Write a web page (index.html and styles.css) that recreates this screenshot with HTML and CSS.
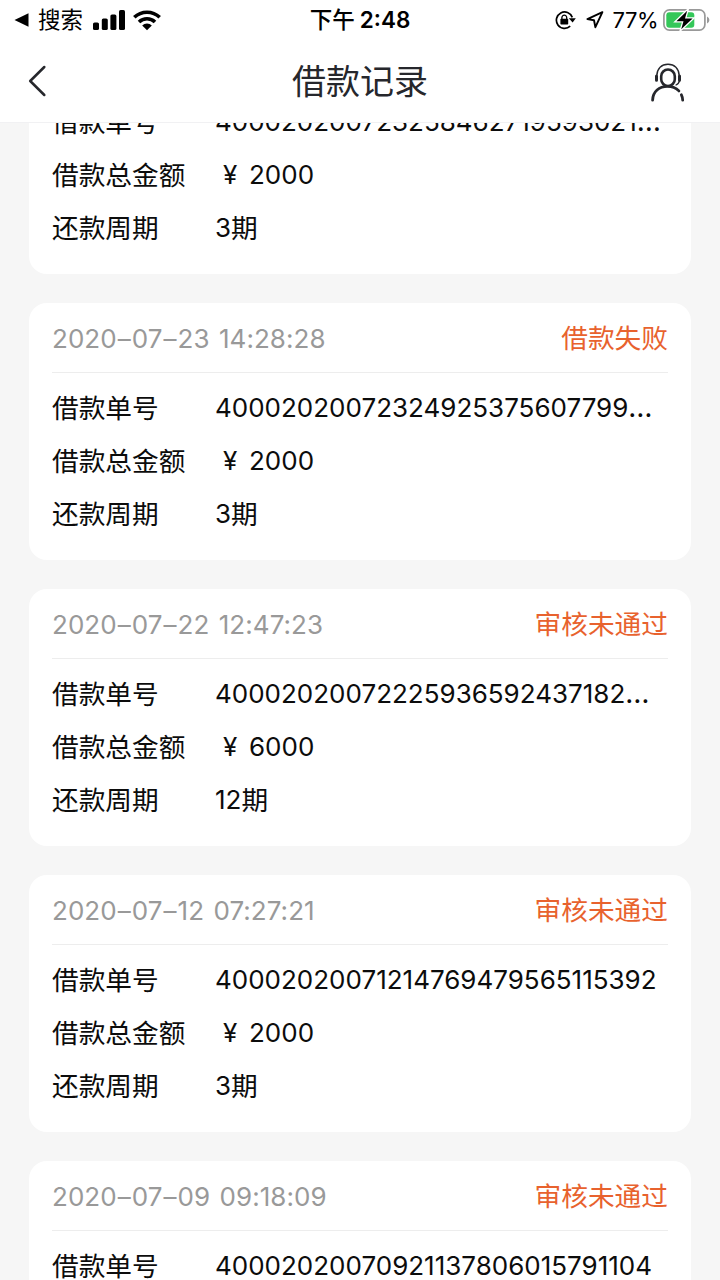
FILE: index.html
```
<!DOCTYPE html>
<html lang="zh-CN">
    <head>
        <meta charset="utf-8">
        <title>借款记录</title>
        <meta name="viewport" content="width=device-width, initial-scale=1">
        <link rel="stylesheet" href="styles.css">
    </head>

    <body>
        <!-- Status bar -->
        <div class="status">
            <div class="status-left">
                <svg class="back-app" width="15" height="14" viewBox="0 0 15 14"><path d="M0.5 7L14.5 0.3V13.7Z"/></svg>
                <span class="search">搜索</span>
                <svg class="signal" width="32" height="21" viewBox="0 0 32 21">
                    <rect x="0" y="12.5" width="6" height="7.5" rx="1.6"/>
                    <rect x="8.8" y="8.5" width="6" height="11.5" rx="1.6"/>
                    <rect x="17.4" y="4.5" width="6" height="15.5" rx="1.6"/>
                    <rect x="26" y="0" width="6" height="20" rx="1.6"/>
                </svg>
                <svg class="wifi" width="28" height="21" viewBox="0 0 28 21">
                    <path d="M1.3 7.3A18.3 18.3 0 0 1 26.7 7.3M6 12A11.5 11.5 0 0 1 22 12" fill="none" stroke="#000" stroke-width="3.6"/>
                    <path d="M9.2 15.4A6.8 6.8 0 0 1 18.8 15.4L14 20.3Z"/>
                </svg>
            </div>
            <div class="status-time"><span>下午</span><b>2:48</b></div>
            <div class="status-right">
                <svg class="lock" width="21" height="20" viewBox="0 0 21 20">
                    <path d="M15.2 16.2A8.2 8.2 0 1 1 17.3 7.4" fill="none" stroke="#000" stroke-width="1.7"/>
                    <path d="M13.8 8.2H20.8L17.6 12.6Z"/>
                    <rect x="5.4" y="8.8" width="7.8" height="5.7" rx="0.8"/>
                    <path d="M6.9 9.5V7.6A2.4 2.4 0 0 1 11.7 7.6V9.5" fill="none" stroke="#000" stroke-width="1.3"/>
                </svg>
                <svg class="arrow" width="18" height="18" viewBox="0 0 18 18"><path d="M16.4 1.2L1.4 8.1L8 9.2L9.4 16.2Z" fill="none" stroke="#000" stroke-width="1.9" stroke-linejoin="round"/></svg>
                <span class="percent">77%</span>
                <svg class="battery" width="47" height="22" viewBox="0 0 47 22">
                    <rect x="0.9" y="0.9" width="41" height="20.2" rx="5.5" fill="#fff" stroke="#999" stroke-width="1.7"/>
                    <rect x="3.3" y="3.3" width="28" height="15.4" rx="3" fill="#34c759"/>
                    <path d="M44 7.4V14.6Q46.4 13.6 46.4 11T44 7.4Z" fill="#999"/>
                    <path d="M24.2 1.8L13.4 12.3H20.5L18.2 20.2L29.6 9.5H22Z" stroke="#fff" stroke-width="2.6" paint-order="stroke"/>
                </svg>
            </div>
        </div>

        <!-- Title bar -->
        <div class="navbar">
            <svg class="back" width="19" height="32" viewBox="0 0 19 32"><path d="M16.3 2L2.2 16L16.3 30" fill="none" stroke="#26272c" stroke-width="2.5" stroke-linecap="round" stroke-linejoin="round"/></svg>
            <h1>借款记录</h1>
            <svg class="service" width="34" height="40" viewBox="0 0 34 40">
                <g fill="none" stroke="#26272c">
                    <rect x="10.2" y="6.5" width="13.6" height="16.5" rx="6.8" stroke-width="2.6"/>
                    <path d="M5.8 12.5C6.3 5.4 10.5 1.2 17 1.2S27.7 5.4 28.2 12.5" stroke-width="1.5"/>
                    <path d="M5.5 13V17.3M28.5 13V17.3" stroke-width="3" stroke-linecap="round"/>
                    <path d="M28.6 17.5Q27.8 21 24.6 22.2" stroke-width="1.2"/>
                    <path d="M1.6 37.2C1.8 28.5 8.3 23.3 16.5 23.3C21.2 23.3 25 24.9 27.9 27.9M30.4 31.8Q31.6 34.2 31.7 37.2" stroke-width="2.8" stroke-linecap="round"/>
                </g>
            </svg>
        </div>

        <!-- Loan records -->
        <div class="page">
            <div class="list">
                <div class="card">
                    <div class="card-head"></div>
                    <div class="card-body">
                        <p><label>借款单号</label><span class="num">400020200723258462719593021<i>…</i></span></p>
                        <p><label>借款总金额</label><span class="yen">¥</span><span class="num">2000</span></p>
                        <p><label>还款周期</label><span class="num">3</span>期</p>
                    </div>
                </div>
                <div class="card">
                    <div class="card-head"><span class="date">2020<i>–</i>07<i>–</i>23 14:28:28</span><span class="state">借款失败</span></div>
                    <div class="card-body">
                        <p><label>借款单号</label><span class="num">40002020072324925375607799<i>…</i></span></p>
                        <p><label>借款总金额</label><span class="yen">¥</span><span class="num">2000</span></p>
                        <p><label>还款周期</label><span class="num">3</span>期</p>
                    </div>
                </div>
                <div class="card">
                    <div class="card-head"><span class="date">2020<i>–</i>07<i>–</i>22 12:47:23</span><span class="state">审核未通过</span></div>
                    <div class="card-body">
                        <p><label>借款单号</label><span class="num">40002020072225936592437182<i>…</i></span></p>
                        <p><label>借款总金额</label><span class="yen">¥</span><span class="num">6000</span></p>
                        <p><label>还款周期</label><span class="num">12</span>期</p>
                    </div>
                </div>
                <div class="card">
                    <div class="card-head"><span class="date">2020<i>–</i>07<i>–</i>12 07:27:21</span><span class="state">审核未通过</span></div>
                    <div class="card-body">
                        <p><label>借款单号</label><span class="num">40002020071214769479565115392</span></p>
                        <p><label>借款总金额</label><span class="yen">¥</span><span class="num">2000</span></p>
                        <p><label>还款周期</label><span class="num">3</span>期</p>
                    </div>
                </div>
                <div class="card">
                    <div class="card-head"><span class="date">2020<i>–</i>07<i>–</i>09 09:18:09</span><span class="state">审核未通过</span></div>
                    <div class="card-body">
                        <p><label>借款单号</label><span class="num">40002020070921137806015791104</span></p>
                    </div>
                </div>
            </div>
        </div>
    </body>
</html>
```
FILE: styles.css
```
* {
    box-sizing: border-box;
}
body {
    margin: 0;
    height: 1280px;
    overflow: hidden;
    display: flex;
    flex-direction: column;
    font-family: Inter, "Noto Sans CJK SC", sans-serif;
    font-size: 26.7px;
    color: #0c0c0c;
    background-color: #fff;
}
svg {
    display: block;
    flex: none;
}

/* status bar */
.status {
    flex: none;
    height: 40px;
    display: grid;
    grid-template-columns: 1fr auto 1fr;
    align-items: center;
    padding: 0 10px;
    font-size: 22.5px;
    line-height: 40px;
    color: #000;
}
.status-left, .status-right, .status-time {
    display: flex;
    align-items: center;
}
.status-right {
    justify-content: flex-end;
}
.back-app {
    margin-left: 4px;
}
.search {
    margin: 0 10px 0 9px;
}
.wifi {
    margin-left: 8px;
}
.status-time {
    gap: 5px;
    font-weight: 500;
}
.status-time b {
    font-weight: 600;
    font-size: 22.5px;
}
.arrow {
    margin: 0 9px 0 10px;
}
.percent {
    font-size: 22px;
    letter-spacing: -0.5px;
    margin-right: 5px;
}

/* title bar */
.navbar {
    flex: none;
    height: 83px;
    display: grid;
    grid-template-columns: 1fr auto 1fr;
    align-items: center;
    border-bottom: 1px solid #f1f1f3;
}
.back {
    margin-left: 28px;
}
.service {
    justify-self: end;
    margin: 4px 35px 0 0;
}
.navbar h1 {
    margin: 0;
    padding-top: 2px;
    font-size: 34px;
    font-weight: 400;
    line-height: 80px;
    color: #26272c;
}

/* records, scrolled part of the way into the first card */
.page {
    flex: 1;
    overflow: hidden;
    background-color: #f6f6f6;
}
.list {
    margin-top: -106px;
    padding: 0 29px;
    display: flex;
    flex-direction: column;
    gap: 29px;
}
.card {
    height: 257px;
    padding: 0 23px;
    border-radius: 18px;
    background-color: #fff;
}
.card-head {
    height: 70px;
    display: flex;
    justify-content: space-between;
    line-height: 69px;
    border-bottom: 1px solid #ededed;
}
.date {
    padding-top: 1px;
    color: #999;
    font-size: 26px;
    letter-spacing: 0.05px;
    word-spacing: 2px;
}
.date i {
    padding: 0 1px;
    font-style: normal;
}
.state {
    padding-top: 1px;
    color: #e8622e;
}
.card-body {
    padding-top: 9px;
}
.card-body p {
    margin: 0;
    height: 53px;
    line-height: 53px;
    display: flex;
    white-space: nowrap;
}
.card-body label {
    width: 163px;
}
.num {
    font-size: 26px;
    line-height: 52px;
}
.num i {
    font-style: normal;
    font-size: 28px;
    letter-spacing: 1px;
    line-height: 1;
}
.yen {
    width: 34px;
    padding-left: 8px;
    font-size: 26px;
    line-height: 52px;
}
```
